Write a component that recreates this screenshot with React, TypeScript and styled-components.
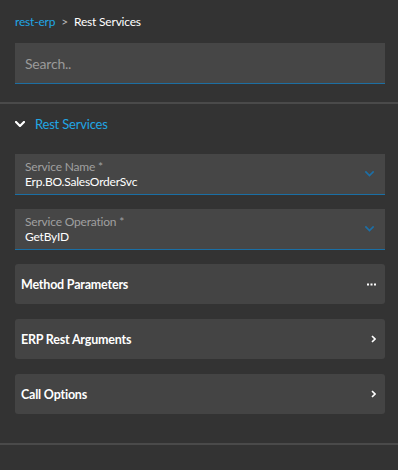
import React from "react";
import styled, { createGlobalStyle } from "styled-components";

const Global = createGlobalStyle`
  html, body { margin: 0; padding: 0; background: #333333; }
  body { font-family: Lato, "Open Sans", sans-serif; -webkit-font-smoothing: antialiased; letter-spacing: -0.2px; }
  * { box-sizing: border-box; }
`;

const Page = styled.div`
  width: 398px;
  height: 470px;
  background: #333333;
  display: flex;
  flex-direction: column;
`;

const Top = styled.div`
  padding: 14px 13px 18px 15px;
  display: flex;
  flex-direction: column;
  gap: 13px;
`;

const Crumbs = styled.div`
  display: flex;
  align-items: center;
  gap: 6px;
  font-size: 12px;
  line-height: 16px;
  height: 16px;
`;

const CrumbLink = styled.span`
  color: #21a6e4;
`;

const CrumbSep = styled.span`
  color: #b8b8b8;
`;

const CrumbCurrent = styled.span`
  color: #ffffff;
`;

const Search = styled.div`
  height: 41px;
  background: #464646;
  border-bottom: 1px solid #1d6fa3;
  display: flex;
  align-items: center;
  padding-left: 10px;
  color: #9a9a9a;
  font-size: 14px;
`;

const Divider = styled.div`
  height: 2px;
  background: #4a4a4a;
  flex-shrink: 0;
`;

const Section = styled.div`
  padding: 11px 13px 29px 15px;
  display: flex;
  flex-direction: column;
`;

const SectionHead = styled.div`
  display: flex;
  align-items: center;
  gap: 10px;
  height: 18px;
  color: #21a6e4;
  font-size: 13px;
  margin-bottom: 21px;
`;

const List = styled.div`
  display: flex;
  flex-direction: column;
  gap: 14px;
`;

const Field = styled.div`
  height: 41px;
  background: #464646;
  border-bottom: 1px solid #1a6fa5;
  display: flex;
  align-items: center;
  justify-content: space-between;
  padding: 0 11px 0 10px;
`;

const FieldText = styled.div`
  display: flex;
  flex-direction: column;
  padding-top: 1px;
`;

const FieldLabel = styled.span`
  color: #a0a0a0;
  font-size: 12px;
  line-height: 15px;
`;

const FieldValue = styled.span`
  color: #ffffff;
  font-size: 12px;
  line-height: 16px;
`;

const Card = styled.div<{ $mt?: number }>`
  height: 40px;
  background: #444444;
  border-radius: 3px;
  display: flex;
  align-items: center;
  justify-content: space-between;
  padding: 0 9px 0 6px;
  color: #ffffff;
  font-size: 12.5px;
  font-weight: 700;
  margin-top: ${(p) => p.$mt ?? 0}px;
`;

const ChevronDown = ({ color, w = 9, stroke = 2 }: { color: string; w?: number; stroke?: number }) => (
  <svg width={w} height={w * 0.62} viewBox="0 0 10 6.2" fill="none">
    <path d="M1 1l4 4 4-4" stroke={color} strokeWidth={stroke} strokeLinecap="square" />
  </svg>
);

const ChevronRight = () => (
  <svg width="5" height="8" viewBox="0 0 5 8" fill="none">
    <path d="M1 1l3 3-3 3" stroke="#ffffff" strokeWidth="1.6" />
  </svg>
);

const Dots = () => (
  <svg width="9" height="3" viewBox="0 0 9 3">
    <rect x="0" y="0.5" width="2" height="2" fill="#fff" />
    <rect x="3.5" y="0.5" width="2" height="2" fill="#fff" />
    <rect x="7" y="0.5" width="2" height="2" fill="#fff" />
  </svg>
);

export default function App() {
  return (
    <Page>
      <Global />
      <Top>
        <Crumbs>
          <CrumbLink>rest-erp</CrumbLink>
          <CrumbSep>&gt;</CrumbSep>
          <CrumbCurrent>Rest Services</CrumbCurrent>
        </Crumbs>
        <Search>Search..</Search>
      </Top>
      <Divider />
      <Section>
        <SectionHead>
          <ChevronDown color="#ffffff" w={10} stroke={2.2} />
          <span>Rest Services</span>
        </SectionHead>
        <List>
          <Field>
            <FieldText>
              <FieldLabel>Service Name *</FieldLabel>
              <FieldValue>Erp.BO.SalesOrderSvc</FieldValue>
            </FieldText>
            <ChevronDown color="#1d6fa6" w={9} stroke={1.8} />
          </Field>
          <Field>
            <FieldText>
              <FieldLabel>Service Operation *</FieldLabel>
              <FieldValue>GetByID</FieldValue>
            </FieldText>
            <ChevronDown color="#1d6fa6" w={9} stroke={1.8} />
          </Field>
          <Card>
            <span>Method Parameters</span>
            <Dots />
          </Card>
          <Card $mt={1}>
            <span>ERP Rest Arguments</span>
            <ChevronRight />
          </Card>
          <Card $mt={1}>
            <span>Call Options</span>
            <ChevronRight />
          </Card>
        </List>
      </Section>
      <Divider />
    </Page>
  );
}
